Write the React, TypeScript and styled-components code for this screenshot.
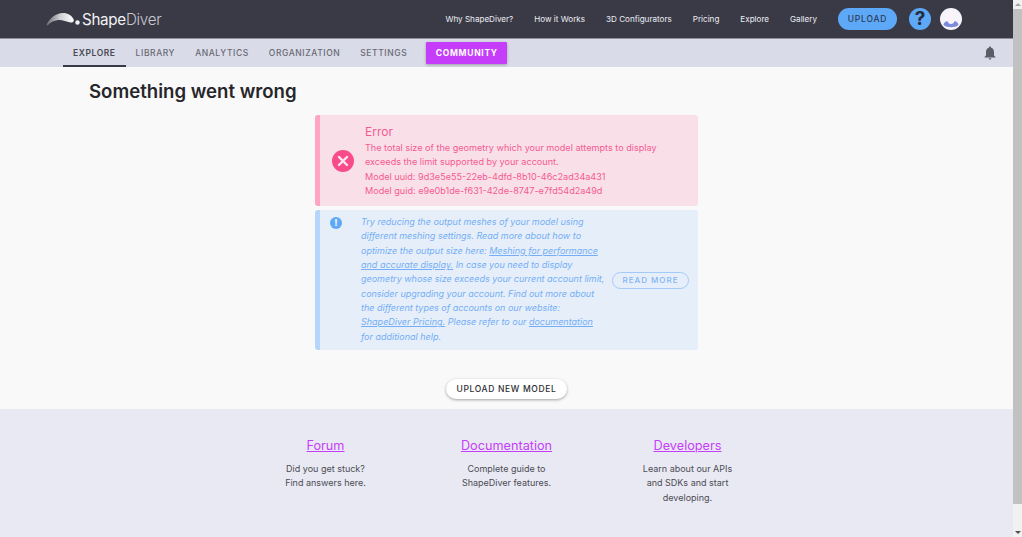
import React from 'react'
import styled, { createGlobalStyle } from 'styled-components'

const GlobalStyle = createGlobalStyle`
    html, body {
        margin: 0;
        height: 100%;
        overflow: hidden;
        font-family: "Inter", "Liberation Sans", sans-serif;
    }
    * { box-sizing: border-box; }
`

const Screen = styled.div`
    display: flex;
    height: 537px;
    width: 1022px;
    overflow: hidden;
`

const Page = styled.div`
    flex: 1;
    min-width: 0;
    display: flex;
    flex-direction: column;
    background: #f9f9f9;
`

const ScrollTrack = styled.div`
    width: 9px;
    background: #f1f1f1;
    display: flex;
    flex-direction: column;
    align-items: stretch;
    justify-content: space-between;
`

const ScrollArrow = styled.div<{ $down?: boolean }>`
    height: 9px;
    display: flex;
    align-items: center;
    justify-content: center;
    &::before {
        content: "";
        border-left: 3px solid transparent;
        border-right: 3px solid transparent;
        ${props => (props.$down ? 'border-top: 3px solid #505050;' : 'border-bottom: 3px solid #a3a3a3;')}
    }
`

const ScrollThumb = styled.div`
    height: 495px;
    margin-bottom: 24px;
    background: #c1c1c1;
`

const TopBar = styled.header`
    height: 39px;
    flex: none;
    background: #3a3a47;
    border-bottom: 1px solid #8e8e9c;
    display: flex;
    align-items: center;
    padding: 0 51px 0 46px;
`

const Logo = styled.div`
    display: flex;
    align-items: center;
    color: #f2f2f2;
    font-size: 15.2px;
    letter-spacing: -0.3px;
    margin-right: auto;
    svg { margin-right: 2px; }
`

const LogoLight = styled.span`
    color: #c9c9d0;
    font-weight: 300;
`

const TopLink = styled.a`
    color: #ecedf1;
    font-size: 8.1px;
    margin-right: 21px;
    white-space: nowrap;
`

const UploadButton = styled.button`
    width: 59px;
    height: 22px;
    border: 0;
    border-radius: 11px;
    background: #5ea8f8;
    color: #2c3a50;
    font-family: inherit;
    font-size: 8.5px;
    font-weight: 500;
    letter-spacing: 0.8px;
    padding: 0;
    margin-right: 12px;
`

const HelpIcon = styled.div`
    width: 22px;
    height: 22px;
    border-radius: 50%;
    background: #5ea8f8;
    color: #252d3c;
    font-size: 19px;
    font-weight: 700;
    line-height: 22px;
    text-align: center;
    margin-right: 9px;
`

const Avatar = styled.div`
    width: 22px;
    height: 22px;
    border-radius: 50%;
    background: #f4f4fa;
    overflow: hidden;
`

const SubNav = styled.nav`
    height: 28px;
    flex: none;
    background: #d9dbe8;
    display: flex;
    align-items: center;
    padding: 0 17px 0 63px;
`

const Tab = styled.a<{ $active?: boolean }>`
    height: 28px;
    display: flex;
    align-items: center;
    padding: 2px 10px 0;
    font-size: 8.5px;
    font-weight: ${props => (props.$active ? 600 : 500)};
    letter-spacing: 0.58px;
    color: ${props => (props.$active ? '#4a4a52' : '#6a6a74')};
    border-bottom: 2px solid ${props => (props.$active ? '#3a3a47' : 'transparent')};
    white-space: nowrap;
`

const CommunityButton = styled.a`
    width: 81px;
    height: 22px;
    margin-left: 9px;
    background: #c63df9;
    color: #fff;
    font-size: 8.5px;
    font-weight: 700;
    letter-spacing: 0.7px;
    display: flex;
    align-items: center;
    justify-content: center;
    box-shadow: 0 1px 3px rgba(0, 0, 0, 0.3);
    border-radius: 1px;
`

const BellWrap = styled.div`
    margin-left: auto;
    display: flex;
`

const Main = styled.main`
    height: 342px;
    flex: none;
    display: flex;
    flex-direction: column;
    align-items: center;
`

const Title = styled.h1`
    align-self: flex-start;
    margin: 12px 0 0 89px;
    font-size: 18.6px;
    line-height: 24px;
    font-weight: 600;
    color: #26262b;
`

const Alert = styled.section<{ $tone: 'error' | 'info' }>`
    width: 383px;
    display: flex;
    background: ${props => (props.$tone === 'error' ? '#f9e0e8' : '#e6eef9')};
    border-left: 5px solid ${props => (props.$tone === 'error' ? '#fda5c3' : '#b5d5fb')};
    border-radius: 3px;
    color: ${props => (props.$tone === 'error' ? '#f55a92' : '#74aef6')};
    font-size: 9px;
    line-height: 14.33px;
`

const ErrorAlert = styled(Alert)`
    height: 91px;
    margin-top: 12px;
    align-items: center;
    padding-left: 12px;
    font-size: 9.1px;
`

const InfoAlert = styled(Alert)`
    height: 140px;
    margin-top: 4px;
    padding: 5px 9px 0 0;
`

const ErrorBadge = styled.div`
    width: 22px;
    height: 22px;
    flex: none;
    margin-right: 11px;
`

const ErrorTitle = styled.div`
    font-size: 12px;
    line-height: 17px;
    margin-bottom: 1px;
`

const InfoBadgeCol = styled.div`
    width: 41px;
    flex: none;
    display: flex;
    padding: 2px 0 0 10px;
`

const InfoBadge = styled.div`
    width: 12px;
    height: 12px;
    border-radius: 50%;
    background: #5ea8f8;
    color: #e6eef9;
    font-size: 9px;
    font-weight: 900;
    line-height: 12px;
    text-align: center;
`

const InfoText = styled.p`
    width: 248px;
    flex: none;
    margin: 0;
    font-style: italic;
    white-space: nowrap;
    a { color: inherit; text-decoration: underline; }
`

const ReadMore = styled.button`
    align-self: center;
    margin-left: auto;
    margin-top: -5px;
    width: 77px;
    height: 17px;
    padding: 0;
    border: 1px solid #a3cbf9;
    border-radius: 9px;
    background: transparent;
    color: #7fb5f6;
    font-family: inherit;
    font-size: 8px;
    font-weight: 500;
    letter-spacing: 1px;
`

const UploadModel = styled.button`
    width: 121px;
    height: 20px;
    margin-top: 29px;
    padding: 0;
    border: 0;
    border-radius: 10px;
    background: #fff;
    color: #2e2e33;
    font-family: inherit;
    font-size: 8.5px;
    font-weight: 500;
    letter-spacing: 0.65px;
    box-shadow: 0 1px 3px rgba(0, 0, 0, 0.35);
`

const Footer = styled.footer`
    flex: 1;
    background: #e9e9f3;
    display: flex;
    justify-content: center;
    padding-top: 28px;
`

const FooterCol = styled.div`
    width: 100px;
    text-align: center;
    color: #4c4c54;
    font-size: 9px;
    line-height: 14.33px;
`

const FooterLink = styled.a`
    display: block;
    color: #c63df9;
    font-size: 12.7px;
    line-height: 18px;
    text-decoration: underline;
    margin-bottom: 7px;
`

const FooterGap = styled.div`
    width: 81px;
    flex: none;
`

function ScrollBar() {
    return (
        <ScrollTrack>
            <ScrollArrow />
            <ScrollThumb />
            <ScrollArrow $down />
        </ScrollTrack>
    )
}

function LogoMark() {
    return (
        <svg width="34" height="14" viewBox="0 0 34 14">
            <defs>
                <linearGradient id="swoosh" x1="0" x2="1" y1="0" y2="0">
                    <stop offset="0" stopColor="#6a6a72" />
                    <stop offset="0.5" stopColor="#cfcfd4" />
                    <stop offset="1" stopColor="#ffffff" />
                </linearGradient>
            </defs>
            <path d="M0.5 12.5 C4 6 10 1 17 1 C22 1 25.5 3.5 27.5 7 C28.5 9.5 27 11 24.5 10.5 C20 9.5 16 7.5 12 8 C8 8.5 4 10.5 1.5 13.5 Z" fill="url(#swoosh)" />
            <circle cx="31.5" cy="10.5" r="2.2" fill="#f0f0f0" />
        </svg>
    )
}

function Bell() {
    return (
        <svg width="12" height="14" viewBox="0 0 12 14">
            <path d="M6 0.5 C6.7 0.5 7.1 1 7.1 1.7 C9.1 2.2 10 3.9 10 6 V9.5 L11.5 11 V11.6 H0.5 V11 L2 9.5 V6 C2 3.9 2.9 2.2 4.9 1.7 C4.9 1 5.3 0.5 6 0.5 Z M4.6 12.2 H7.4 C7.4 13 6.8 13.5 6 13.5 C5.2 13.5 4.6 13 4.6 12.2 Z" fill="#5c5c66" />
        </svg>
    )
}

function AvatarFigure() {
    return (
        <svg width="22" height="22" viewBox="0 0 22 22">
            <ellipse cx="11" cy="9" rx="5" ry="6.5" fill="#faf4fa" />
            <path d="M3.5 17 C4 14 6 13.5 7.5 13 C8 17 14 17 14.5 13 C16 13.5 18 14 18.5 17 C15 20 7 20 3.5 17 Z" fill="#7d8bd8" />
        </svg>
    )
}

function ErrorIcon() {
    return (
        <svg width="22" height="22" viewBox="0 0 22 22">
            <circle cx="11" cy="11" r="11" fill="#f84c8a" />
            <path d="M7 7 L15 15 M15 7 L7 15" stroke="#fbe7ee" strokeWidth="2.4" strokeLinecap="round" />
        </svg>
    )
}

const navLinks = ['Why ShapeDiver?', 'How it Works', '3D Configurators', 'Pricing', 'Explore', 'Gallery']
const tabs = ['LIBRARY', 'ANALYTICS', 'ORGANIZATION', 'SETTINGS']

export default function App() {
    return (
        <Screen>
            <GlobalStyle />
            <Page>
                <TopBar>
                    <Logo>
                        <LogoMark />
                        Shape<LogoLight>Diver</LogoLight>
                    </Logo>
                    {navLinks.map(link => <TopLink key={link}>{link}</TopLink>)}
                    <UploadButton>UPLOAD</UploadButton>
                    <HelpIcon>?</HelpIcon>
                    <Avatar><AvatarFigure /></Avatar>
                </TopBar>
                <SubNav>
                    <Tab $active>EXPLORE</Tab>
                    {tabs.map(tab => <Tab key={tab}>{tab}</Tab>)}
                    <CommunityButton>COMMUNITY</CommunityButton>
                    <BellWrap><Bell /></BellWrap>
                </SubNav>
                <Main>
                    <Title>Something went wrong</Title>
                    <ErrorAlert $tone="error">
                        <ErrorBadge><ErrorIcon /></ErrorBadge>
                        <div>
                            <ErrorTitle>Error</ErrorTitle>
                            The total size of the geometry which your model attempts to display<br />
                            exceeds the limit supported by your account.<br />
                            Model uuid: 9d3e5e55-22eb-4dfd-8b10-46c2ad34a431<br />
                            Model guid: e9e0b1de-f631-42de-8747-e7fd54d2a49d
                        </div>
                    </ErrorAlert>
                    <InfoAlert $tone="info">
                        <InfoBadgeCol><InfoBadge>!</InfoBadge></InfoBadgeCol>
                        <InfoText>
                            Try reducing the output meshes of your model using<br />
                            different meshing settings. Read more about how to<br />
                            optimize the output size here: <a>Meshing for performance<br />
                            and accurate display.</a> In case you need to display<br />
                            geometry whose size exceeds your current account limit,<br />
                            consider upgrading your account. Find out more about<br />
                            the different types of accounts on our website:<br />
                            <a>ShapeDiver Pricing.</a> Please refer to our <a>documentation</a><br />
                            for additional help.
                        </InfoText>
                        <ReadMore>READ MORE</ReadMore>
                    </InfoAlert>
                    <UploadModel>UPLOAD NEW MODEL</UploadModel>
                </Main>
                <Footer>
                    <FooterCol>
                        <FooterLink>Forum</FooterLink>
                        Did you get stuck?<br />Find answers here.
                    </FooterCol>
                    <FooterGap />
                    <FooterCol>
                        <FooterLink>Documentation</FooterLink>
                        Complete guide to<br />ShapeDiver features.
                    </FooterCol>
                    <FooterGap />
                    <FooterCol>
                        <FooterLink>Developers</FooterLink>
                        Learn about our APIs<br />and SDKs and start<br />developing.
                    </FooterCol>
                </Footer>
            </Page>
            <ScrollBar />
        </Screen>
    )
}
